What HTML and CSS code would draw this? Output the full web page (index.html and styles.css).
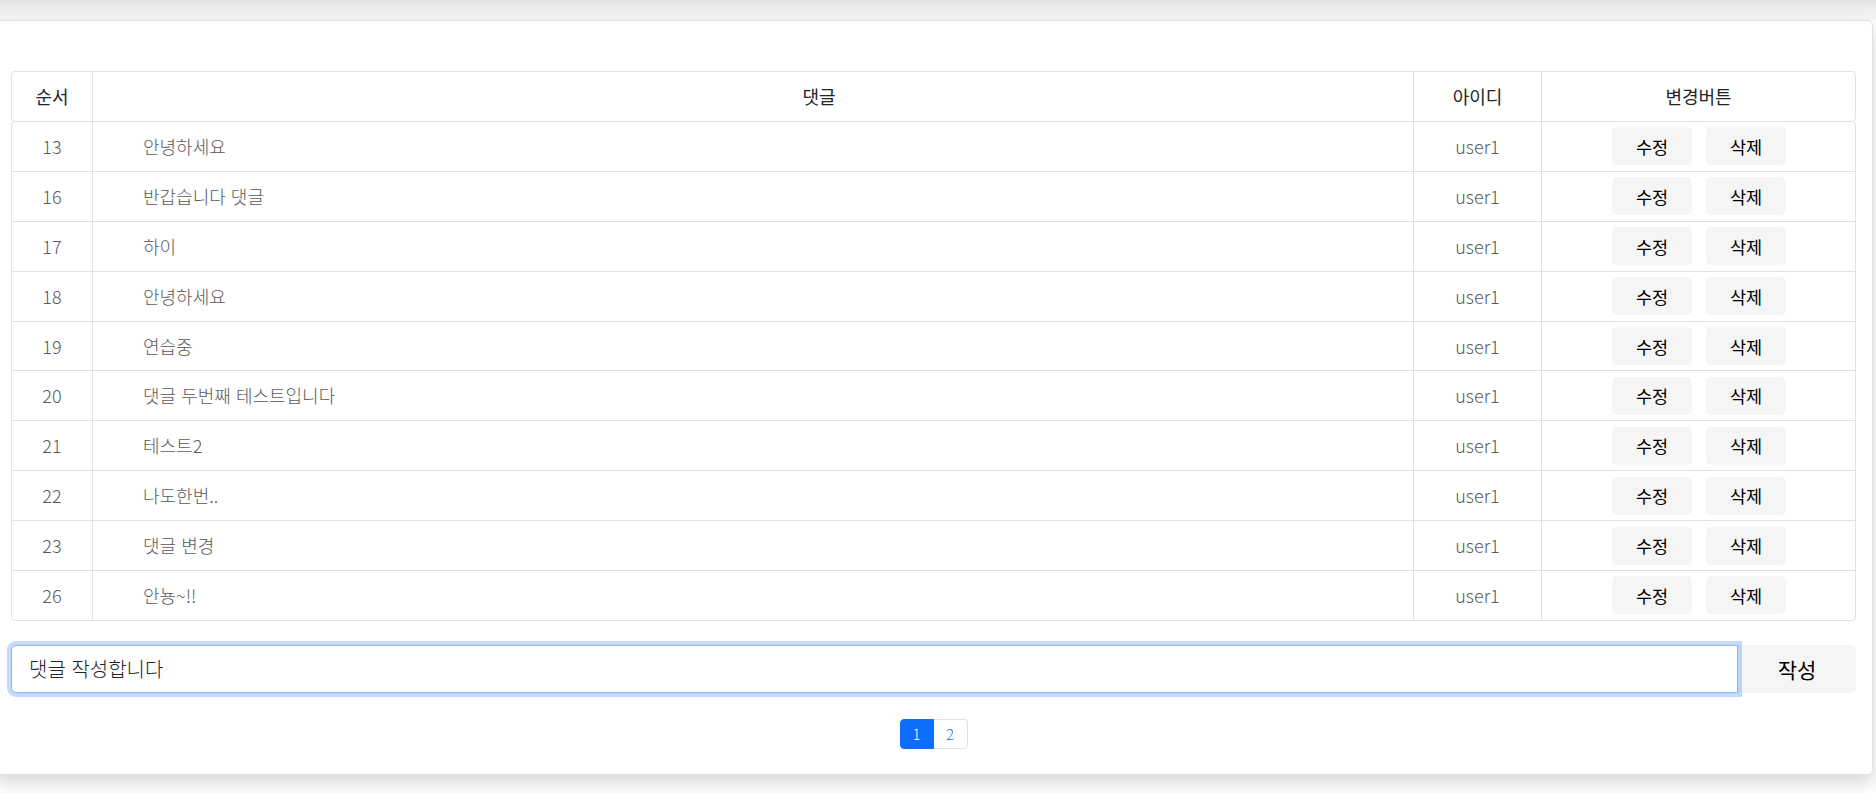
FILE: index.html
```html
<!DOCTYPE html>
<html lang="ko">
<head>
<meta charset="utf-8">
<title>댓글</title>
<link rel="stylesheet" href="styles.css">
</head>
<body>
<div class="shade"></div>
<main class="card">
  <div class="grid">
    <div class="thead">
      <div class="row">
        <div class="cell">순서</div>
        <div class="cell c-comment-h">댓글</div>
        <div class="cell">아이디</div>
        <div class="cell">변경버튼</div>
      </div>
    </div>
    <div class="tbody">
      <div class="row"><div class="cell">13</div><div class="cell c-comment">안녕하세요</div><div class="cell">user1</div><div class="cell c-btns"><button class="btn">수정</button><button class="btn">삭제</button></div></div>
      <div class="row"><div class="cell">16</div><div class="cell c-comment">반갑습니다 댓글</div><div class="cell">user1</div><div class="cell c-btns"><button class="btn">수정</button><button class="btn">삭제</button></div></div>
      <div class="row"><div class="cell">17</div><div class="cell c-comment">하이</div><div class="cell">user1</div><div class="cell c-btns"><button class="btn">수정</button><button class="btn">삭제</button></div></div>
      <div class="row"><div class="cell">18</div><div class="cell c-comment">안녕하세요</div><div class="cell">user1</div><div class="cell c-btns"><button class="btn">수정</button><button class="btn">삭제</button></div></div>
      <div class="row"><div class="cell">19</div><div class="cell c-comment">연습중</div><div class="cell">user1</div><div class="cell c-btns"><button class="btn">수정</button><button class="btn">삭제</button></div></div>
      <div class="row"><div class="cell">20</div><div class="cell c-comment">댓글 두번째 테스트입니다</div><div class="cell">user1</div><div class="cell c-btns"><button class="btn">수정</button><button class="btn">삭제</button></div></div>
      <div class="row"><div class="cell">21</div><div class="cell c-comment">테스트2</div><div class="cell">user1</div><div class="cell c-btns"><button class="btn">수정</button><button class="btn">삭제</button></div></div>
      <div class="row"><div class="cell">22</div><div class="cell c-comment">나도한번..</div><div class="cell">user1</div><div class="cell c-btns"><button class="btn">수정</button><button class="btn">삭제</button></div></div>
      <div class="row"><div class="cell">23</div><div class="cell c-comment">댓글 변경</div><div class="cell">user1</div><div class="cell c-btns"><button class="btn">수정</button><button class="btn">삭제</button></div></div>
      <div class="row"><div class="cell">26</div><div class="cell c-comment">안뇽~!!</div><div class="cell">user1</div><div class="cell c-btns"><button class="btn">수정</button><button class="btn">삭제</button></div></div>
    </div>
  </div>

  <form class="input-group">
    <input class="input" type="text" value="댓글 작성합니다">
    <button type="button" class="btn-lg">작성</button>
  </form>

  <nav class="pager">
    <a class="page active">1</a>
    <a class="page">2</a>
  </nav>
</main>
</body>
</html>
```

FILE: styles.css
```css
* { box-sizing: border-box; }

html, body {
  margin: 0;
  padding: 0;
  height: 793px;
  overflow: hidden;
}

body {
  background: #ffffff;
  font-family: "Noto Sans CJK KR", "Noto Sans", sans-serif;
  color: #212529;
  font-size: 16px;
  line-height: 1.5;
}

.shade {
  height: 20px;
  background: linear-gradient(to bottom, #e3e3e3, #f8f8f8);
}

.card {
  display: flex;
  flex-direction: column;
  margin: 0 3px 0 -6px;
  padding: 50px 16px 25px;
  background: #fff;
  border: 1px solid #e2e2e2;
  border-radius: 5px;
  box-shadow: 0 8px 18px rgba(0, 0, 0, 0.16);
}

.thead, .tbody {
  border: 1px solid #dee2e6;
  border-radius: 4px;
  font-size: 18px;
}

.tbody { margin-top: -1px; }

.row {
  display: grid;
  grid-template-columns: 80px 1321px 128px 1fr;
  height: 49.9px;
  border-bottom: 1px solid #dee2e6;
}

.thead .row { height: 49px; border-bottom: 0; }
.tbody .row:last-child { border-bottom: 0; height: 48.9px; }

.cell {
  display: flex;
  align-items: center;
  justify-content: center;
  border-left: 1px solid #dee2e6;
}

.cell:first-child { border-left: 0; }

.thead .cell { color: #212529; font-weight: 400; }

.tbody .cell { color: #595959; font-weight: 300; }

.c-comment-h { padding-left: 132px; }

.c-comment { justify-content: flex-start; padding-left: 50px; }

.c-btns { gap: 14px; padding-left: 1px; }

.btn {
  width: 80px;
  height: 38px;
  border: 0;
  border-radius: 5px;
  background: #f5f5f5;
  color: #000;
  font-family: inherit;
  font-size: 17.5px;
  font-weight: 400;
  padding: 0;
}

.input-group {
  display: flex;
  margin: 24px 0 0;
  height: 48px;
}

.input {
  flex: 1;
  min-width: 0;
  height: 48px;
  border: 1px solid #86b7fe;
  border-radius: 5px 0 0 5px;
  box-shadow: 0 0 0 4px rgba(13, 110, 253, 0.25);
  padding: 0 17px;
  font-family: inherit;
  font-size: 20px;
  font-weight: 300;
  color: #212529;
  outline: none;
  position: relative;
  z-index: 2;
}

.btn-lg {
  width: 118px;
  height: 48px;
  border: 0;
  border-radius: 0 5px 5px 0;
  background: #f5f5f5;
  color: #000;
  font-family: inherit;
  font-size: 21px;
  padding: 0;
}

.pager {
  display: flex;
  justify-content: center;
  margin-top: 26px;
}

.page {
  width: 34px;
  height: 30px;
  display: flex;
  align-items: center;
  justify-content: center;
  font-size: 15px;
  color: #0d6efd;
  border: 1px solid #dee2e6;
  font-weight: 300;
}

.page:first-child { border-radius: 4px 0 0 4px; }
.page:last-child { border-radius: 0 4px 4px 0; border-left: 0; }

.page.active {
  background: #0d6efd;
  border-color: #0d6efd;
  color: #fff;
}
```
